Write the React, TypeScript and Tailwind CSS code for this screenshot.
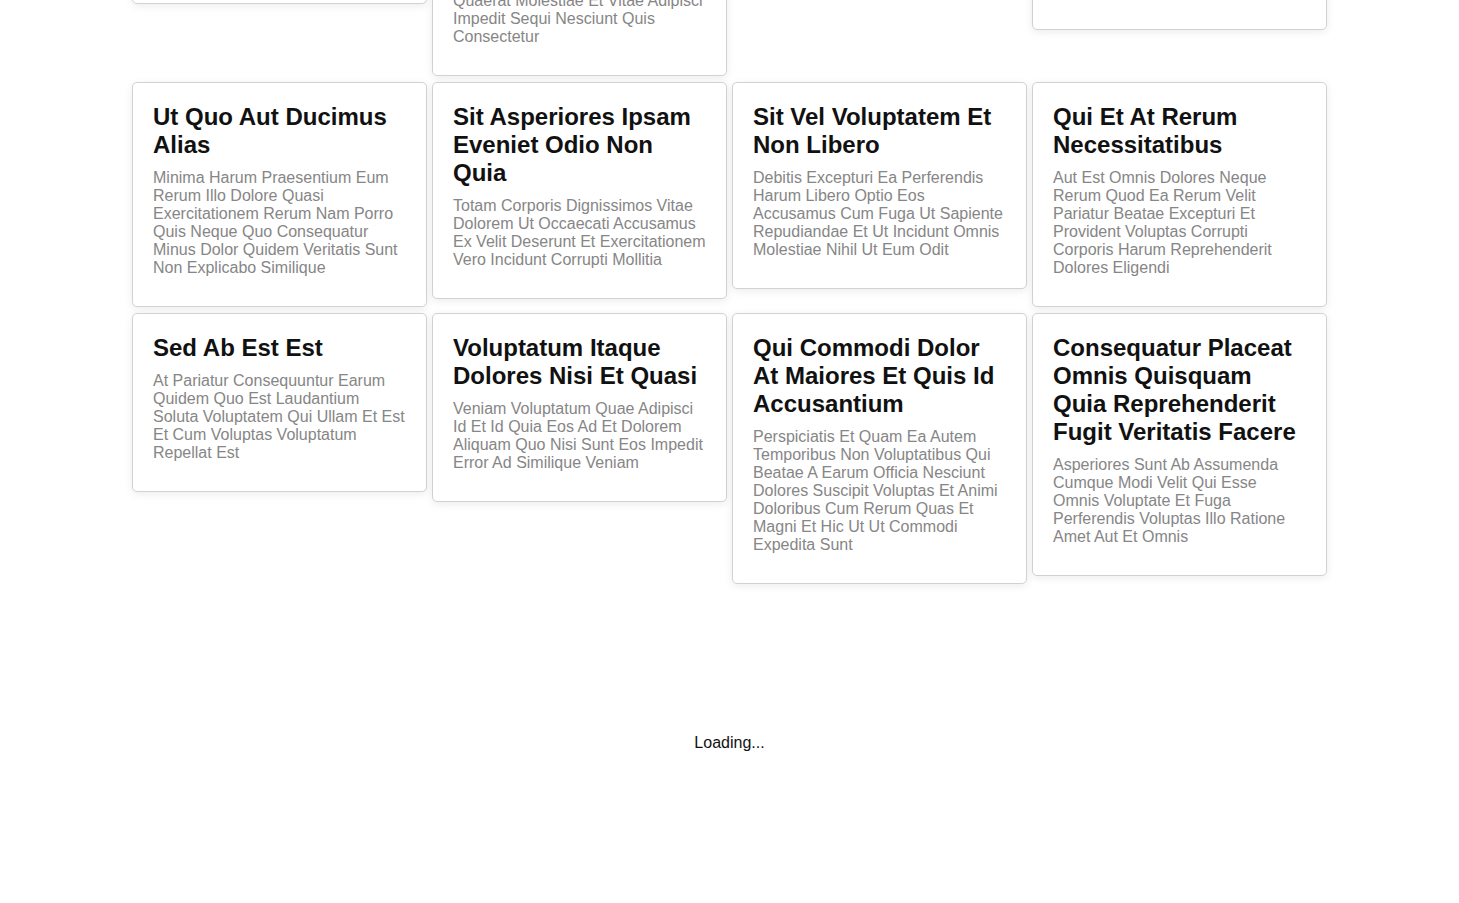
import React from "react";

type Post = { title: string; body: string; lead?: string };

const posts: Post[] = [
  {
    title: "Eum Et Est Occaecati Dolor Sit",
    body: "Ullam Et Saepe Reiciendis",
  },
  {
    title: "Nesciunt Quas Odio Magnam Ut",
    lead: "Repudiandae Veniam Quaerat Sunt Sed Alias Aut Fugiat Sit",
    body: "Quaerat Molestiae Et Vitae Adipisci Impedit Sequi Nesciunt Quis Consectetur",
  },
  {
    title: "Qui Est Esse",
    body: "Est Rerum Tempore Vitae",
  },
  {
    title: "Dolorem Eum Magni",
    body: "Ut Aspernatur Corporis Harum Nihil Quis Provident Sequi Mollitia Nobis Aliquid Molestiae Perspiciatis Et Ea Nemo Ab Reprehenderit",
  },
  {
    title: "Ut Quo Aut Ducimus Alias",
    body: "Minima Harum Praesentium Eum Rerum Illo Dolore Quasi Exercitationem Rerum Nam Porro Quis Neque Quo Consequatur Minus Dolor Quidem Veritatis Sunt Non Explicabo Similique",
  },
  {
    title: "Sit Asperiores Ipsam Eveniet Odio Non Quia",
    body: "Totam Corporis Dignissimos Vitae Dolorem Ut Occaecati Accusamus Ex Velit Deserunt Et Exercitationem Vero Incidunt Corrupti Mollitia",
  },
  {
    title: "Sit Vel Voluptatem Et Non Libero",
    body: "Debitis Excepturi Ea Perferendis Harum Libero Optio Eos Accusamus Cum Fuga Ut Sapiente Repudiandae Et Ut Incidunt Omnis Molestiae Nihil Ut Eum Odit",
  },
  {
    title: "Qui Et At Rerum Necessitatibus",
    body: "Aut Est Omnis Dolores Neque Rerum Quod Ea Rerum Velit Pariatur Beatae Excepturi Et Provident Voluptas Corrupti Corporis Harum Reprehenderit Dolores Eligendi",
  },
  {
    title: "Sed Ab Est Est",
    body: "At Pariatur Consequuntur Earum Quidem Quo Est Laudantium Soluta Voluptatem Qui Ullam Et Est Et Cum Voluptas Voluptatum Repellat Est",
  },
  {
    title: "Voluptatum Itaque Dolores Nisi Et Quasi",
    body: "Veniam Voluptatum Quae Adipisci Id Et Id Quia Eos Ad Et Dolorem Aliquam Quo Nisi Sunt Eos Impedit Error Ad Similique Veniam",
  },
  {
    title: "Qui Commodi Dolor At Maiores Et Quis Id Accusantium",
    body: "Perspiciatis Et Quam Ea Autem Temporibus Non Voluptatibus Qui Beatae A Earum Officia Nesciunt Dolores Suscipit Voluptas Et Animi Doloribus Cum Rerum Quas Et Magni Et Hic Ut Ut Commodi Expedita Sunt",
  },
  {
    title: "Consequatur Placeat Omnis Quisquam Quia Reprehenderit Fugit Veritatis Facere",
    body: "Asperiores Sunt Ab Assumenda Cumque Modi Velit Qui Esse Omnis Voluptate Et Fuga Perferendis Voluptas Illo Ratione Amet Aut Et Omnis",
  },
];

function Card({ post }: { post: Post }) {
  return (
    <div className="my-[3px] self-start rounded-[5px] border border-[#d2d2d2] bg-white p-5 shadow-[0_2px_8px_rgba(0,0,0,0.08)]">
      <h2 className="mb-[10px] text-[24px] font-bold leading-[28px] text-[#111111]">{post.title}</h2>
      <p className="mb-[9px] text-[16px] leading-[18px] text-[#868686]">
        {post.lead ? <span className="block">{post.lead}</span> : null}
        <span className="block">{post.body}</span>
      </p>
    </div>
  );
}

export default function App() {
  return (
    <div className="h-[903px] overflow-hidden bg-white font-['Liberation_Sans',Arial,sans-serif]">
      <div className="-mt-[134px] w-[1459px]">
        <div className="ml-[132px] grid grid-cols-[repeat(4,295px)] items-start gap-x-[5px]">
          {posts.map((p, i) => (
            <Card key={i} post={p} />
          ))}
        </div>
        <div className="mt-[147px] text-center text-[16px] leading-[18px] text-[#111111]">Loading...</div>
      </div>
    </div>
  );
}
